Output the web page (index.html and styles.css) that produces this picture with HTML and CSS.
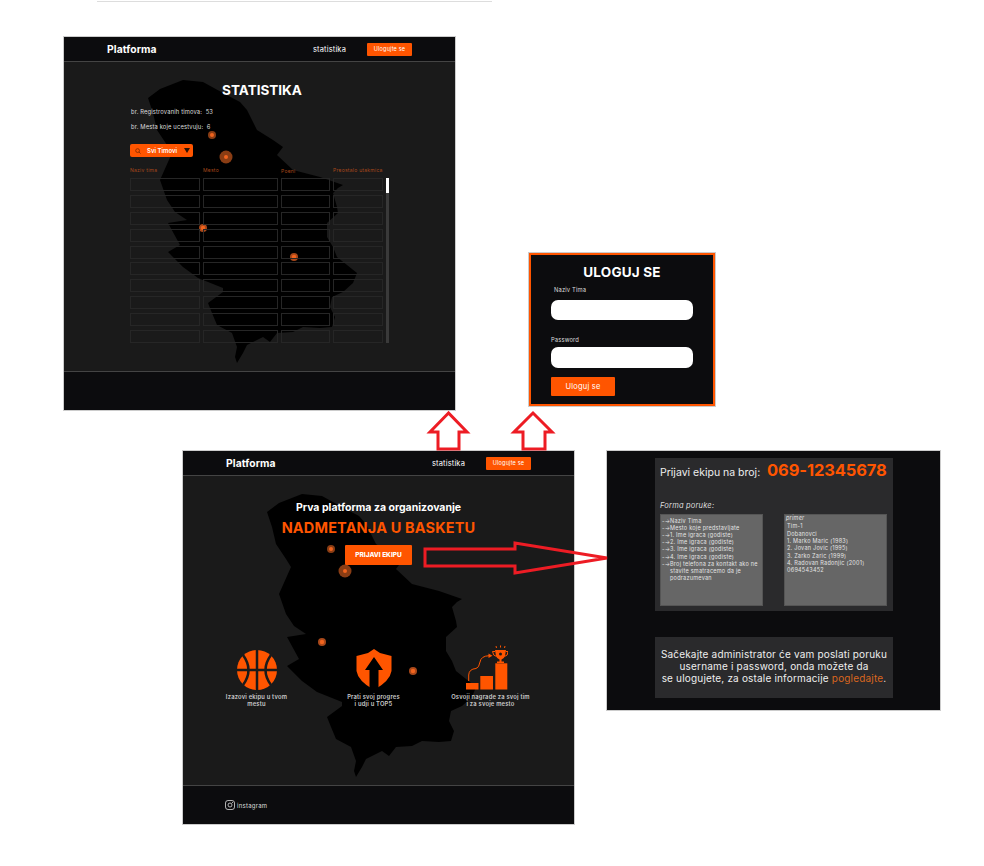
FILE: index.html
```html
<!doctype html>
<html lang="sr">

<head>
    <meta charset="UTF-8">
    <title>Platforma</title>
    <link rel="stylesheet" href="styles.css">
</head>

<body>
    <div class="top-line"></div>

    <svg class="defs" width="0" height="0">
        <symbol id="map" viewBox="0 0 391 373">
            <path fill="#000" d="M84 61 96 52 119 43 139 45 159 56 176 65 183 73 193 93 209 103 219 110 213 118 229 133 256 140 279 148 274 151 269 156 273 170 274 176 263 186 263 200 269 210 273 220 293 236 289 246 279 255 268 260 266 270 271 280 268 290 256 291 239 290 229 295 213 296 206 305 199 300 183 308 179 316 173 326 171 320 173 310 168 296 153 288 148 276 144 266 159 255 159 251 139 243 134 241 119 230 104 215 116 208 104 186 123 183 111 175 103 163 96 143 108 116 103 108 93 93 89 76Z" />
            <circle class="pin-halo" cx="148" cy="98" r="4" />
            <circle class="pin-dot" cx="148" cy="98" r="2" />
            <circle class="pin-halo" cx="162" cy="120" r="6.5" />
            <circle class="pin-dot" cx="162" cy="120" r="2" />
            <circle class="pin-halo pin-halo-strong" cx="139" cy="191" r="4" />
            <circle class="pin-dot" cx="139" cy="191" r="2.200" />
            <circle class="pin-halo pin-halo-strong" cx="230" cy="220" r="4" />
            <circle class="pin-dot" cx="230" cy="220" r="2.200" />
        </symbol>
    </svg>

    <!-- statistika -->
    <div class="screen screen-stats">
        <svg class="map"><use href="#map" /></svg>
        <div class="header">
            <div class="logo">Platforma</div>
            <div class="nav-link">statistika</div>
            <div class="nav-btn">Ulogujte se</div>
        </div>
        <div class="main stats-main">
            <div class="stats-title">STATISTIKA</div>
            <div class="stats-line">br. Registrovanih timova: &nbsp;53</div>
            <div class="stats-line">br. Mesta koje ucestvuju: &nbsp;6</div>
            <div class="dropdown">
                <svg class="dropdown-search" width="6" height="6" viewBox="0 0 6 6"><circle cx="2.6" cy="2.6" r="1.9" /><path d="M4 4l1.6 1.6" /></svg>
                <span class="dropdown-text">Svi Timovi</span>
                <span class="dropdown-arrow"></span>
            </div>
            <div class="table-head">
                <span>Naziv tima</span>
                <span>Mesto</span>
                <span class="head-low">Poeni</span>
                <span>Preostalo utakmica</span>
            </div>
            <div class="table-wrap">
                <div class="table">
                    <div></div><div></div><div></div><div></div>
                    <div></div><div></div><div></div><div></div>
                    <div></div><div></div><div></div><div></div>
                    <div></div><div></div><div></div><div></div>
                    <div></div><div></div><div></div><div></div>
                    <div></div><div></div><div></div><div></div>
                    <div></div><div></div><div></div><div></div>
                    <div></div><div></div><div></div><div></div>
                    <div></div><div></div><div></div><div></div>
                    <div></div><div></div><div></div><div></div>
                </div>
                <div class="scrollbar"><div class="scrollbar-thumb"></div></div>
            </div>
        </div>
        <div class="footer"></div>
    </div>

    <!-- login -->
    <div class="login">
        <div class="login-title">ULOGUJ SE</div>
        <div class="login-label login-label-first">Naziv Tima</div>
        <div class="login-input"></div>
        <div class="login-label login-label-second">Password</div>
        <div class="login-input login-input-second"></div>
        <div class="login-btn">Uloguj se</div>
    </div>

    <!-- pocetna -->
    <div class="screen screen-home">
        <svg class="map"><use href="#map" /></svg>
        <div class="header">
            <div class="logo">Platforma</div>
            <div class="nav-link">statistika</div>
            <div class="nav-btn">Ulogujte se</div>
        </div>
        <div class="main home-main">
            <div class="home-title">Prva platforma za organizovanje</div>
            <div class="home-heading">NADMETANJA U BASKETU</div>
            <div class="home-btn">PRIJAVI EKIPU</div>
            <div class="features">
                <div class="feature">
                    <div class="feature-icon">
                        <svg width="40" height="40" viewBox="0 0 40 40">
                            <circle cx="20" cy="20" r="20" fill="#ff5500" />
                            <path class="ball-lines" d="M20 0V40M0 20H40M6 5Q17 20 6 35M34 5Q23 20 34 35" />
                        </svg>
                    </div>
                    <div class="feature-text">Izazovi ekipu u tvom<br>mestu</div>
                </div>
                <div class="feature">
                    <div class="feature-icon">
                        <svg width="36" height="41" viewBox="0 0 36 41">
                            <path fill="#ff5500" d="M18 0 24 4 35.500 7V22Q34 32 18 41 2 32 .5 22V7L12 4Z" />
                            <path fill="#000" d="M18 8 27 21H22.500V41H13.500V21H9Z" />
                        </svg>
                    </div>
                    <div class="feature-text">Prati svoj progres<br>i udji u TOP5</div>
                </div>
                <div class="feature">
                    <div class="feature-icon feature-icon-chart">
                        <svg width="42" height="45" viewBox="0 0 42 45">
                            <g fill="#ff5500">
                                <rect x="0" y="38" width="12.500" height="6.500" />
                                <rect x="14.300" y="31" width="12.700" height="13.500" />
                                <rect x="29.300" y="18.300" width="12" height="26.200" />
                                <path d="M29 5H40L39 11Q38 14 35.500 14.500V16.500H38V18H31V16.500H33.500V14.500Q31 14 30 11Z" />
                                <path d="M22.500 8.500 26.500 10.700 22.500 13Z" />
                            </g>
                            <path class="chart-line" d="M2.700 36V30Q3 24 10 23.500 13 23 14 17 15 11 23 10.700" />
                            <path class="chart-line" d="M29 6.500H26.500Q27 11 30.500 11.500M40 6.500H42Q42 11 38.500 11.500M30.500 3 30 1M34.500 2.500V.5M38.500 3 39 1" />
                            <circle cx="34.500" cy="9" r="1.500" fill="#1a1a1a" />
                        </svg>
                    </div>
                    <div class="feature-text">Osvoji nagrade za svoj tim<br>i za svoje mesto</div>
                </div>
            </div>
        </div>
        <div class="footer footer-home">
            <svg class="insta" width="10" height="10" viewBox="0 0 10 10">
                <rect x=".5" y=".5" width="9" height="9" rx="2.500" />
                <circle cx="5" cy="5" r="2" />
                <circle class="insta-dot" cx="7.500" cy="2.500" r=".5" />
            </svg>
            <span>instagram</span>
        </div>
    </div>

    <!-- prijava ekipe -->
    <div class="screen screen-form">
        <div class="form-panel">
            <div class="phone-row">
                <span class="phone-label">Prijavi ekipu na broj:</span>
                <span class="phone-number">069-12345678</span>
            </div>
            <div class="form-subtitle">Forma poruke:</div>
            <div class="form-boxes">
                <div class="form-box">
                    <div class="form-item">Naziv Tima</div>
                    <div class="form-item">Mesto koje predstavljate</div>
                    <div class="form-item">1. Ime igraca (godiste)</div>
                    <div class="form-item">2. Ime igraca (godiste)</div>
                    <div class="form-item">3. Ime igraca (godiste)</div>
                    <div class="form-item">4. Ime igraca (godiste)</div>
                    <div class="form-item">Broj telefona za kontakt ako ne stavite smatracemo da je podrazumevan</div>
                </div>
                <div class="form-box form-box-sample">
                    <div class="sample-head">primer</div>
                    <div class="sample-team">Tim-1</div>
                    <div class="sample-team">Dobanovci</div>
                    <div>1. Marko Maric (1983)</div>
                    <div>2. Jovan Jovic (1995)</div>
                    <div>3. Zarko Zaric (1999)</div>
                    <div>4. Radovan Radonjic (2001)</div>
                    <div>0694543452</div>
                </div>
            </div>
        </div>
        <div class="note-panel">
            Sačekajte administrator će vam poslati poruku<br>
            username i password, onda možete da<br>
            se ulogujete, za ostale informacije <span class="note-link">pogledajte</span>.
        </div>
    </div>

    <!-- strelice -->
    <svg class="arrows" width="984" height="866" viewBox="0 0 984 866">
        <path d="M448.500 413 430 432H438V449H459V432H467Z" />
        <path d="M533 413 514 432H523V449H545V432H552Z" />
        <path d="M425 549H515V543L607 558 515 573V566H425Z" />
    </svg>
</body>

</html>
```

FILE: styles.css
```css
* {
    margin: 0;
    padding: 0;
    box-sizing: border-box;
}

body {
    position: relative;
    width: 984px;
    height: 866px;
    overflow: hidden;
    background: #fff;
    font-family: "Inter", "Liberation Sans", sans-serif;
    color: #fff;
}

.top-line {
    position: absolute;
    left: 97px;
    top: 1px;
    width: 395px;
    height: 1px;
    background: #ddd;
}

.defs {
    position: absolute;
}

.pin-halo {
    fill: #8a3d14;
}

.pin-halo-strong {
    fill: #a8481a;
}

.pin-dot {
    fill: #f0641e;
}

/* okviri */
.screen {
    position: absolute;
    display: flex;
    flex-direction: column;
    border: 1px solid #ccc;
    background: #1a1a1a;
}

.screen-stats {
    left: 63px;
    top: 36px;
    width: 393px;
    height: 375px;
}

.screen-home {
    left: 182px;
    top: 450px;
    width: 393px;
    height: 375px;
}

.screen-form {
    left: 606px;
    top: 450px;
    width: 335px;
    height: 261px;
    padding: 7px 0 0 48px;
    background: #0c0c0e;
}

.map {
    position: absolute;
    left: 0;
    top: 0;
    width: 391px;
    height: 373px;
}

.header {
    position: relative;
    display: flex;
    align-items: center;
    flex: none;
    height: 25px;
    padding: 0 43px;
    background: #0c0c0e;
    border-bottom: 1px solid #444;
}

.logo {
    margin-right: auto;
    font-size: 10.300px;
    font-weight: 700;
    letter-spacing: .1px;
}

.nav-link {
    margin-right: 21px;
    font-size: 7.500px;
    letter-spacing: .15px;
}

.nav-btn {
    width: 45px;
    height: 13px;
    line-height: 13px;
    text-align: center;
    font-size: 5.500px;
    letter-spacing: .2px;
    background: #ff5500;
    border-radius: 1px;
}

.main {
    position: relative;
    flex: none;
    height: 309px;
}

.footer {
    position: relative;
    flex: 1;
    background: #0c0c0e;
    border-top: 1px solid #444;
}

/* statistika */
.stats-main {
    padding: 20px 0 0 66px;
}

.stats-title {
    margin-left: -61px;
    height: 16px;
    line-height: 16px;
    text-align: center;
    font-size: 13.500px;
    font-weight: 700;
}

.stats-line {
    height: 8px;
    margin-top: 7px;
    padding-left: 1px;
    line-height: 8px;
    font-size: 5.800px;
    letter-spacing: .15px;
    color: #ddd;
}

.stats-title + .stats-line {
    margin-top: 10px;
}

.dropdown {
    display: flex;
    align-items: center;
    width: 63px;
    height: 13px;
    margin-top: 13px;
    padding: 0 3px 0 5px;
    background: #ff5500;
    border-radius: 2px;
    font-size: 6px;
    font-weight: 600;
}

.dropdown-search {
    fill: none;
    stroke: #7a2a00;
    stroke-width: .8;
}

.dropdown-text {
    margin-left: 6px;
}

.dropdown-arrow {
    margin-left: auto;
    border-left: 3.500px solid transparent;
    border-right: 3.500px solid transparent;
    border-top: 5px solid #2a1206;
}

.table-head {
    position: relative;
    display: grid;
    grid-template-columns: 70px 75px 49px 50px;
    column-gap: 3px;
    height: 8px;
    margin-top: 9px;
    line-height: 8px;
    font-size: 5px;
    letter-spacing: .25px;
    white-space: nowrap;
    color: #a8481a;
}

.head-low {
    padding-top: 1px;
}

.table-wrap {
    display: flex;
    gap: 3px;
    margin-top: 4px;
}

.table {
    display: grid;
    grid-template-columns: 70px 75px 49px 50px;
    grid-auto-rows: 13px;
    gap: 3.900px 3px;
}

.table div {
    border: 1px solid #262626;
}

.scrollbar {
    width: 3px;
    background: #3a3a3a;
}

.scrollbar-thumb {
    height: 15px;
    background: #fff;
}

/* login */
.login {
    position: absolute;
    left: 529px;
    top: 253px;
    width: 186px;
    height: 153px;
    padding: 0 20px;
    background: #0c0c0e;
    border: 2px solid #ff5500;
    outline: 1px solid #ccc;
}

.login-title {
    margin-top: 9px;
    height: 16px;
    line-height: 16px;
    text-align: center;
    font-size: 13.500px;
    font-weight: 700;
    letter-spacing: .2px;
}

.login-label {
    height: 8px;
    line-height: 8px;
    font-size: 5.800px;
    letter-spacing: .15px;
    color: #ddd;
}

.login-label-first {
    margin-top: 6px;
    padding-left: 3px;
}

.login-label-second {
    margin-top: 16px;
}

.login-input {
    width: 142px;
    height: 20px;
    margin-top: 6px;
    background: #fff;
    border-radius: 7px;
}

.login-input-second {
    height: 21px;
    margin-top: 3px;
}

.login-btn {
    width: 64px;
    height: 19px;
    margin-top: 9px;
    line-height: 19px;
    text-align: center;
    font-size: 7.500px;
    letter-spacing: .2px;
    background: #ff5500;
    border-radius: 1px;
}

/* pocetna */
.home-main {
    display: flex;
    flex-direction: column;
    align-items: center;
    padding-top: 26px;
}

.home-title {
    height: 12px;
    line-height: 12px;
    font-size: 10.500px;
    font-weight: 700;
}

.home-heading {
    height: 16px;
    margin-top: 6px;
    line-height: 16px;
    font-size: 14.500px;
    font-weight: 700;
    letter-spacing: .15px;
    color: #ff5500;
}

.home-btn {
    width: 67px;
    height: 20px;
    margin-top: 9px;
    line-height: 20px;
    text-align: center;
    font-size: 6.500px;
    font-weight: 800;
    background: #ff5500;
    border-radius: 1px;
}

.features {
    display: grid;
    grid-template-columns: repeat(3, 117px);
    align-self: flex-start;
    margin: 80px 0 0 15px;
}

.feature {
    display: flex;
    flex-direction: column;
    align-items: center;
}

.feature-icon {
    display: flex;
    align-items: flex-end;
    height: 45px;
}

.feature-icon-chart {
    margin-left: -7px;
}

.ball-lines {
    fill: none;
    stroke: #1a1a1a;
    stroke-width: 2.500;
}

.chart-line {
    fill: none;
    stroke: #ff5500;
    stroke-width: 1;
}

.feature-text {
    margin-top: 2.500px;
    line-height: 7px;
    text-align: center;
    font-size: 5.800px;
    font-weight: 600;
    letter-spacing: .2px;
    color: #ccc;
}

.footer-home {
    display: flex;
    align-items: center;
    gap: 2px;
    padding-left: 42px;
    font-size: 6px;
    letter-spacing: .25px;
    color: #ddd;
}

.insta {
    fill: none;
    stroke: #ddd;
    stroke-width: .8;
}

.insta-dot {
    fill: #ddd;
    stroke: none;
}

/* prijava ekipe */
.form-panel {
    width: 238px;
    height: 153px;
    padding: 2px 5px 0;
    background: #2a2a2c;
}

.phone-row {
    display: flex;
    align-items: baseline;
    height: 20px;
    line-height: 20px;
    white-space: nowrap;
}

.phone-label {
    width: 107px;
    font-size: 10.500px;
    color: #eee;
}

.phone-number {
    font-size: 16.500px;
    font-weight: 700;
    letter-spacing: -.1px;
    color: #ff5500;
}

.form-subtitle {
    height: 10px;
    margin-top: 21px;
    line-height: 10px;
    font-size: 7.500px;
    font-style: italic;
    letter-spacing: .2px;
    color: #ddd;
}

.form-boxes {
    display: flex;
    gap: 21px;
    margin-top: 3px;
}

.form-box {
    width: 103px;
    height: 92px;
    padding: 2.500px 0 0 1px;
    background: #666;
    border: 1px solid #555;
    font-size: 5.500px;
    line-height: 7.200px;
    letter-spacing: .25px;
    color: #e4e4e4;
}

.form-item {
    position: relative;
    padding-left: 8px;
}

.form-item::before {
    content: "-\2192";
    position: absolute;
    left: 0;
}

.form-box-sample {
    padding: 0 0 0 2px;
}

.sample-head {
    margin-left: -1px;
    font-style: italic;
}

.sample-team {
    line-height: 8px;
}

.note-panel {
    width: 238px;
    height: 61px;
    margin-top: 26px;
    padding-top: 11px;
    text-align: center;
    background: #2a2a2c;
    font-size: 10px;
    line-height: 12px;
    letter-spacing: .18px;
    white-space: nowrap;
    color: #eee;
}

.note-link {
    color: #d9661f;
}

.arrows {
    position: absolute;
    left: 0;
    top: 0;
    fill: #fff;
    stroke: #ed1c24;
    stroke-width: 3;
}

.arrows path:last-child {
    fill: none;
}
```
